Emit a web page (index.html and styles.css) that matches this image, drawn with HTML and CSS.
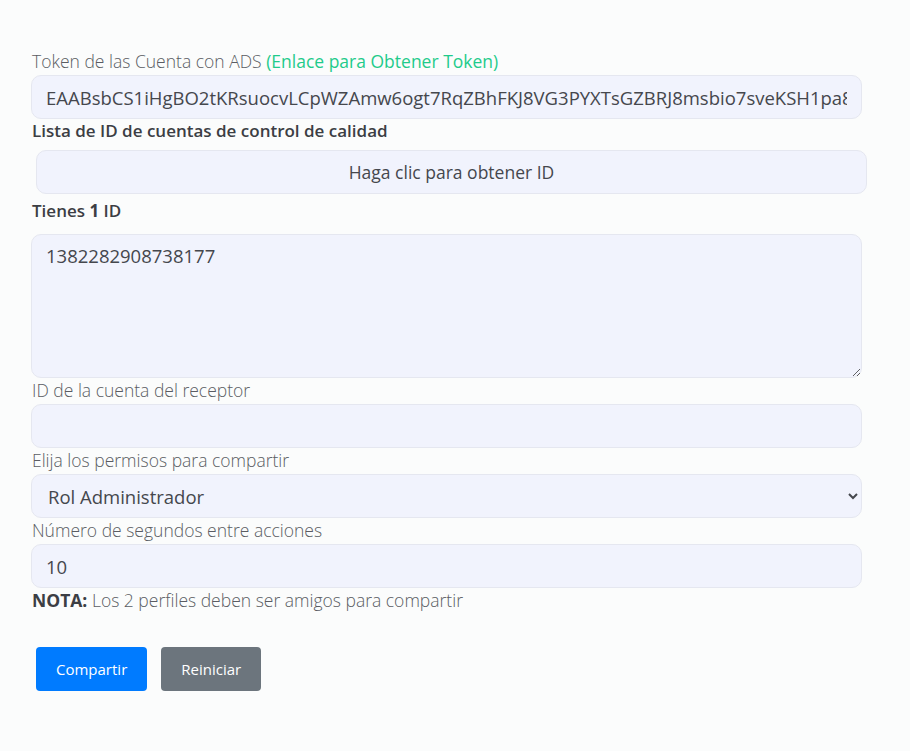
FILE: index.html
```html
<!DOCTYPE html>
<html lang="es">

<head>
    <meta charset="UTF-8">
    <meta name="viewport" content="width=device-width, initial-scale=1.0">
    <title>Compartir cuentas</title>
    <link rel="stylesheet" href="styles.css">
</head>

<body>
    <div class="share-container">
        <label for="token">Token de las Cuenta con ADS <a class="token-link" href="#">(Enlace para Obtener Token)</a></label>
        <input type="text" id="token" class="field" value="EAABsbCS1iHgBO2tKRsuocvLCpWZAmw6ogt7RqZBhFKJ8VG3PYXTsGZBRJ8msbio7sveKSH1pa8ZCwZB">

        <label class="label-bold">Lista de ID de cuentas de control de calidad</label>
        <button class="get-ids-btn">Haga clic para obtener ID</button>

        <label class="label-bold count-label">Tienes <b>1</b> ID</label>
        <textarea id="idList" class="field id-list">1382282908738177</textarea>

        <label for="receiver">ID de la cuenta del receptor</label>
        <input type="text" id="receiver" class="field">

        <label for="role">Elija los permisos para compartir</label>
        <select id="role" class="field">
            <option value="admin">Rol Administrador</option>
            <option value="advertiser">Rol Anunciante</option>
            <option value="analyst">Rol Analista</option>
        </select>

        <label for="delay">Número de segundos entre acciones</label>
        <input type="number" id="delay" class="field" value="10">

        <p class="note"><b>NOTA:</b> Los 2 perfiles deben ser amigos para compartir</p>

        <div class="actions">
            <button class="btn btn-primary">Compartir</button>
            <button class="btn btn-secondary">Reiniciar</button>
        </div>
    </div>
</body>

</html>
```

FILE: styles.css
```css
body {
    font-family: 'Open Sans', sans-serif;
    margin: 0;
    padding: 0;
    background-color: #fbfcfc;
    color: #555;
}

.share-container {
    width: 831px;
    padding: 49px 0 0 31px;
    display: flex;
    flex-direction: column;
}

label {
    display: block;
    font-size: 17.5px;
    line-height: 24px;
    font-weight: 300;
    color: #5a5c63;
    margin: 0 0 2px 1px;
    white-space: nowrap;
}

.label-bold {
    font-size: 17px;
    font-weight: 600;
    color: #3c3e44;
}

.count-label {
    margin-bottom: 11px;
}

.count-label b {
    font-weight: 700;
}

.token-link {
    font-weight: 400;
    color: #1fcb8b;
    text-decoration: none;
}

.field {
    box-sizing: border-box;
    width: 100%;
    height: 44px;
    padding: 0 14px;
    margin: 0;
    font-family: inherit;
    font-size: 18.5px;
    color: #45474d;
    background-color: #f1f3fd;
    border: 1px solid #e5e7f0;
    border-radius: 10px;
    outline: none;
}

.id-list {
    height: 144px;
    padding-top: 8px;
    line-height: 26px;
    resize: vertical;
}

select.field {
    padding-left: 12px;
}

.get-ids-btn {
    box-sizing: border-box;
    width: 100%;
    height: 44px;
    margin: 5px 0 5px 5px;
    font-family: inherit;
    font-size: 17.5px;
    font-weight: 400;
    color: #45474d;
    background-color: #f1f3fd;
    border: 1px solid #e5e7f0;
    border-radius: 10px;
    cursor: pointer;
}

.note {
    margin: 0 0 0 1px;
    font-size: 17.5px;
    line-height: 24px;
    font-weight: 300;
    color: #5a5c63;
}

.note b {
    font-weight: 700;
    color: #3c3e44;
}

.actions {
    display: flex;
    gap: 14px;
    margin: 35px 0 0 5px;
}

.btn {
    height: 44px;
    padding: 0 20px;
    border: none;
    border-radius: 4px;
    font-family: inherit;
    font-size: 15px;
    color: #fff;
    cursor: pointer;
}

.btn-primary {
    background-color: #007bff;
}

.btn-secondary {
    background-color: #6c757d;
}
```
